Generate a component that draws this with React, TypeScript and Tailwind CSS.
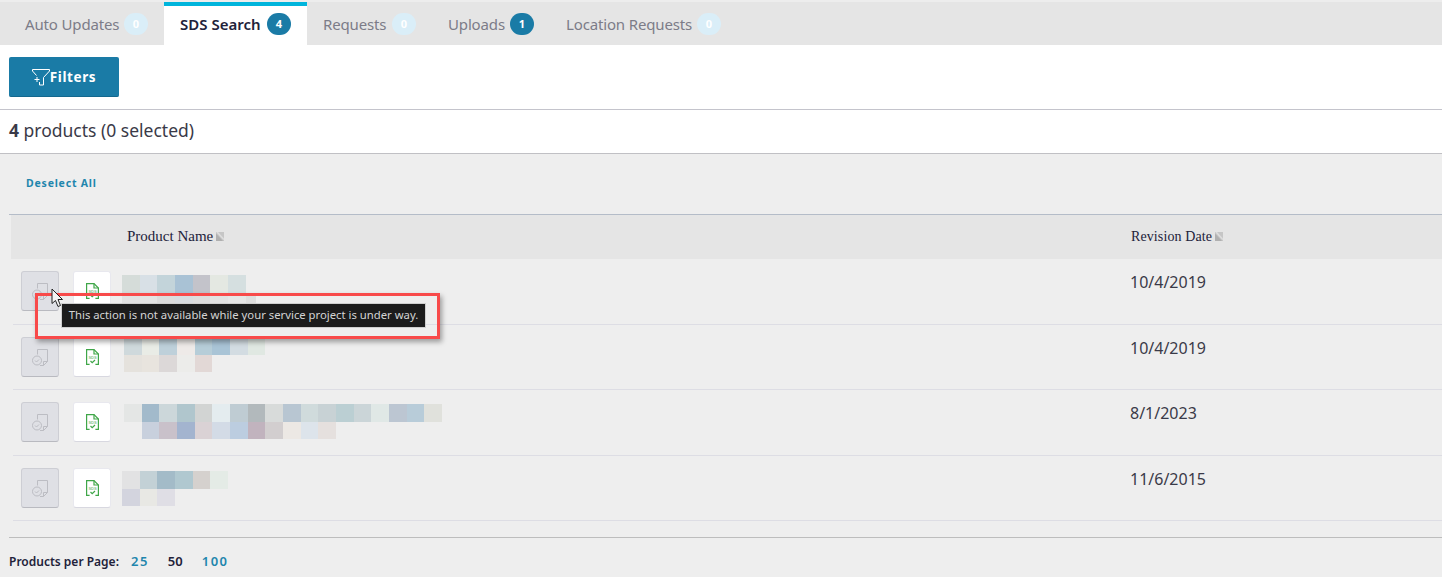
import type { ReactNode } from 'react';

const TABS = [
  { label: 'Auto Updates', count: 0, width: 'w-[155px]' },
  { label: 'SDS Search', count: 4, width: 'w-[143px]', active: true },
  { label: 'Requests', count: 0, width: 'w-[125px]' },
  { label: 'Uploads', count: 1, width: 'w-[118px]' },
  { label: 'Location Requests', count: 0, width: 'w-[187px]' },
];

// The names are pixelated in the source, so each one is a grid of colour blocks.
const ROWS = [
  {
    height: 'h-[66px]',
    nameClass: 'ml-[11px] mt-[16px] w-[1008px]',
    bottomClass: 'w-[134px] overflow-hidden',
    date: '10/4/2019',
    top: ['#d5dcd9', '#d8e0e6', '#c3d4da', '#a9c2d5', '#c3c3ca', '#e4e8e2', '#d5dfe0'],
    bottom: ['#e2e2e2', '#e4e4e4', '#dcdcdc', '#d8dce0', '#dddddd', '#e2e2e2', '#e6e6e6', '#dedede'],
  },
  {
    height: 'h-[65px]',
    nameClass: 'ml-[13px] mt-[12px] w-[1006px]',
    bottomClass: '',
    date: '10/4/2019',
    top: ['#cfd9dc', '#e9ece6', '#bed0da', '#eeeae8', '#b6cdd8', '#a9c4d6', '#d3dce2', '#e0e8e2'],
    bottom: ['#e5e2dd', '#e8e4de', '#dcd8d8', '#ececea', '#e2d8d6'],
  },
  {
    height: 'h-[66px]',
    nameClass: 'ml-[13px] mt-[14px] w-[1006px]',
    bottomClass: '',
    date: '8/1/2023',
    top: ['#e4e6e5', '#a2bacb', '#ccd7da', '#b0c6cd', '#d2d4d3', '#e4ecef', '#bfccd3', '#b2b9bc', '#d8dbda', '#b8c6d2', '#d0dbdc', '#c8d2d5', '#bbcfd3', '#cbd5d8', '#e0e8e6', '#bcc6d2', '#b8ccd9', '#e0e1dc'],
    bottom: ['#eeeeee', '#c8d0dd', '#c9c1ca', '#a3b4cf', '#dad2d5', '#d3dbe6', '#bccde0', '#c1b3be', '#d2cecf', '#ece8e4', '#dde4eb', '#e5e0de'],
  },
  {
    height: 'h-[65px]',
    nameClass: 'ml-[11px] mt-[15px] w-[1008px]',
    bottomClass: '',
    date: '11/6/2015',
    top: ['#e2e2e3', '#c3d1d6', '#a3bbc8', '#b0c8d0', '#d5d1ce', '#e4ebe6'],
    bottom: ['#d3d4de', '#e8e8e4', '#dfdee5'],
  },
];

function SortIcon() {
  return (
    <svg width="8" height="9" viewBox="0 0 8 9" className="ml-[3px] shrink-0">
      <rect width="8" height="9" fill="#c6c6c6" />
      <path d="M0 1.500V9h7z" fill="#b0b0b0" />
      <path d="M1 0l7 7.500" stroke="#dedede" strokeWidth="1.500" />
    </svg>
  );
}

function FilterIcon() {
  return (
    <svg width="18" height="17" viewBox="0 0 18 17" fill="none" stroke="#fff" strokeWidth="1" className="shrink-0">
      <path d="M.5 .500h17v1.500l-6 6.500v7.500h-4v-3" />
      <path d="M.5 .500v1.500l4 4.500" />
      <path d="M2.500 10.500h5M5 8v5" />
    </svg>
  );
}

function SubmitIcon() {
  return (
    <svg width="16" height="17" viewBox="0 0 16 17" fill="none" stroke="#bcbdc3" strokeWidth="1">
      <path d="M5.500 5.500V.500h10v12l-4 4H8" />
      <path d="M11.500 16.500v-4h4" />
      <circle cx="5" cy="11.500" r="4.500" />
      <path d="M3 11.500l1.500 1.500 2.500-2.500" />
    </svg>
  );
}

function SdsIcon() {
  return (
    <svg width="13" height="16" viewBox="0 0 13 16" fill="none" stroke="#3fa648" strokeWidth="1.200">
      <path d="M3.600 15.400H.6V.600h7.400l4.400 4.400v10.400h-3" />
      <path d="M8 .600V5h4.400" />
      <text x="6.500" y="9.500" textAnchor="middle" fontSize="4" fontWeight="700" fill="#86c48c" stroke="none" fontFamily="'Liberation Sans', sans-serif">SDS</text>
      <path d="M4.500 12l1.700 1.700L9 11" />
    </svg>
  );
}

function IconButton({ muted, children }: { muted?: boolean; children: ReactNode }) {
  return (
    <button
      type="button"
      className={`flex h-10 w-[38px] shrink-0 items-center justify-center rounded-[3px] border ${
        muted ? 'border-[#cdced4] border-b-[#b9bac0] bg-[#dfe0e5]' : 'border-[#e8e8ee] border-b-[#d8d8e0] bg-white'
      }`}
    >
      {children}
    </button>
  );
}

export default function App() {
  return (
    <div className="relative h-[577px] overflow-hidden bg-[#eeeeee] font-['Noto_Sans',sans-serif]">
      {/* tabs */}
      <div className="h-[2px] bg-[#ededed]" />
      <div className="flex h-[43px] bg-[#e5e5e5] pl-[9px]">
        {TABS.map((t) => (
          <div
            key={t.label}
            className={`flex items-center justify-between px-4 ${t.width} ${t.active ? 'border-t-4 border-[#00b5dc] bg-white pb-[3px]' : 'pt-px'}`}
          >
            <span className={t.active ? 'text-[15px] font-semibold text-[#22223a]' : 'text-[15px] tracking-[-0.15px] text-[#7c7c88]'}>{t.label}</span>
            <span
              className={`flex h-[22px] w-6 items-center justify-center rounded-full text-[11px] font-bold text-white ${
                t.count > 0 ? 'bg-[#1a7ba6]' : 'bg-[#daeef8]'
              }`}
            >
              {t.count}
            </span>
          </div>
        ))}
      </div>

      {/* filters + count */}
      <div className="bg-white">
        <div className="h-[65px] border-b border-[#c4c4cc] pl-[9px] pt-3">
          <button
            type="button"
            className="flex h-10 w-[110px] items-center justify-center rounded-[2px] border-b border-[#14688e] bg-[#1a7ba6] pt-px text-[13.5px] font-bold tracking-[0.6px] text-white"
          >
            <FilterIcon />
            Filters
          </button>
        </div>
        <div className="flex h-[44px] items-center border-b border-[#c0c0c4] pb-[2px] pl-[9px] text-[17.5px] text-[#3a3a48]">
          <span className="font-bold">4</span>&nbsp;products (0 selected)
        </div>
      </div>

      {/* list */}
      <div className="flex h-[60px] items-center pl-[26px] text-[10.5px] font-bold tracking-[0.8px] text-[#1f86ad]">
        Deselect All
      </div>
      <div className="ml-[9px] border-t border-[#b4bcc8] pl-[2px]">
        <div className="flex h-[44px] items-center bg-[#e5e5e5] pb-[2px] font-['Liberation_Serif',serif] text-[#22223a]">
          <div className="ml-[116px] flex w-[1004px] items-center text-[15px]">
            Product Name
            <SortIcon />
          </div>
          <div className="flex items-center text-[14px] tracking-[0.1px]">
            Revision Date
            <SortIcon />
          </div>
        </div>
        <div className="ml-[2px]">
          {ROWS.map((r, i) => (
            <div key={i} className={`flex border-b border-[#dddde4] ${r.height}`}>
              <div className="ml-2 mt-3 flex gap-[14px]">
                <IconButton muted>
                  <SubmitIcon />
                </IconButton>
                <IconButton>
                  <SdsIcon />
                </IconButton>
              </div>
              <div className={`shrink-0 ${r.nameClass}`}>
                <div className="flex h-[18px]">
                  {r.top.map((c, j) => (
                    <div key={j} className="h-full w-[17.67px] shrink-0" style={{ backgroundColor: c }} />
                  ))}
                </div>
                <div className={`flex h-[17px] ${r.bottomClass}`}>
                  {r.bottom.map((c, j) => (
                    <div key={j} className="h-full w-[17.67px] shrink-0" style={{ backgroundColor: c }} />
                  ))}
                </div>
              </div>
              <div className="mt-[11px] text-[16px] text-[#3a3a48]">{r.date}</div>
            </div>
          ))}
        </div>
      </div>

      {/* footer */}
      <div className="ml-[9px] mt-4 flex h-[48px] items-center border-t border-[#bdbdbd] text-[12px] font-semibold text-[#22223a]">
        Products per Page:
        <span className="ml-3 text-[13px] tracking-[1.500px] text-[#1f86ad]">25</span>
        <span className="ml-[19px] text-[13px] text-[#22223a]">50</span>
        <span className="ml-[19px] text-[13px] tracking-[1.500px] text-[#1f86ad]">100</span>
      </div>

      {/* tooltip with red annotation */}
      <div className="absolute left-[35px] top-[293px] h-[46px] w-[405px] border-[3px] border-[#f84a4a] shadow-[2px_3px_5px_rgba(0,0,0,0.35)]" />
      <div className="absolute left-[61px] top-[303px] flex h-[25px] w-[365px] items-center justify-center whitespace-nowrap border border-[#cfcfcf] bg-[#1c1c1c] text-[11.3px] text-[#d4d4d4]">
        This action is not available while your service project is under way.
      </div>
      <svg width="14" height="20" viewBox="0 0 14 20" className="absolute left-[51px] top-[288px]">
        <path d="M1 1v14.500l3.500-3 2.500 6 2.500-1-2.500-6h4.500z" fill="#f4f4f4" stroke="#222" strokeWidth="1" />
      </svg>
    </div>
  );
}
